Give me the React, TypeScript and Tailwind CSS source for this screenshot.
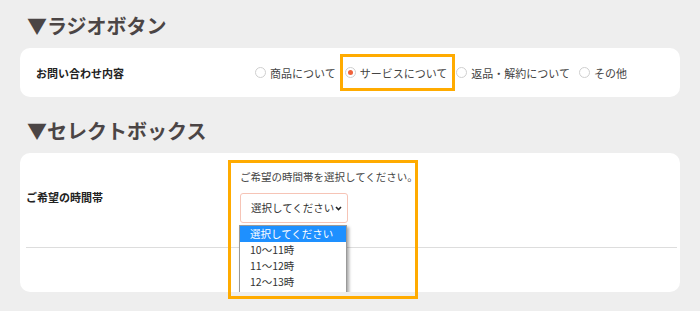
import React from 'react';

const font = "font-['Noto_Sans_CJK_JP','Noto_Sans',sans-serif]";

const options = [
  { label: '商品について', checked: false },
  { label: 'サービスについて', checked: true },
  { label: '返品・解約について', checked: false },
  { label: 'その他', checked: false },
];

const times = ['選択してください', '10〜11時', '11〜12時', '12〜13時'];

const Radio: React.FC<{ label: string; checked: boolean }> = ({ label, checked }) => (
  <label className="flex items-center gap-[4px] mr-[9px]">
    <span className="w-[11px] h-[11px] rounded-full border border-[#cfcfcf] bg-white flex items-center justify-center">
      {checked && <span className="w-[5px] h-[5px] rounded-full bg-[#f0623c]" />}
    </span>
    <span className="text-[11px] leading-[16px] text-[#444] whitespace-nowrap">{label}</span>
  </label>
);

const App: React.FC = () => {
  return (
    <div className={`${font} relative w-[700px] h-[311px] overflow-hidden bg-[#eeeeee] px-[20px] pt-[12px]`}>
      <h2 className="ml-[7px] text-[20px] leading-[28px] font-bold text-[#4b4545]">▼ラジオボタン</h2>

      <div className="mt-[8px] h-[49px] rounded-[10px] bg-white flex items-center">
        <div className="w-[235px] pl-[16px] text-[11px] leading-[16px] font-bold text-[#222]">お問い合わせ内容</div>
        <div className="flex items-center">
          {options.map((o) => (
            <Radio key={o.label} label={o.label} checked={o.checked} />
          ))}
        </div>
      </div>

      <h2 className="mt-[20px] ml-[7px] text-[20px] leading-[28px] font-bold text-[#4b4545]">▼セレクトボックス</h2>

      <div className="relative mt-[8px] h-[139px] rounded-[10px] bg-white overflow-hidden">
        <div className="flex h-[94px]">
          <div className="w-[220px] pl-[6px] pb-[6px] flex items-center text-[11px] leading-[16px] font-bold text-[#222]">
            ご希望の時間帯
          </div>
          <div className="pt-[16px]">
            <p className="text-[10.5px] leading-[16px] text-[#444] whitespace-nowrap">ご希望の時間帯を選択してください。</p>
            <div className="mt-[8px] w-[108px] h-[30px] rounded-[3px] border border-[#f6c4b6] flex items-center justify-between pl-[10px] pr-[5px]">
              <span className="text-[10.5px] leading-[16px] text-[#333] whitespace-nowrap">選択してください</span>
              <svg width="7" height="5" viewBox="0 0 7 5" className="shrink-0">
                <path d="M1 1l2.5 2.5L6 1" fill="none" stroke="#222" strokeWidth="1.6" />
              </svg>
            </div>
          </div>
        </div>
        <div className="ml-[6px] mr-[3px] border-t border-[#dddddd]" />

        <ul className="absolute top-[72px] left-[219px] w-[108px] h-[72px] bg-white border border-[#9a9a9a] shadow-[2px_2px_3px_rgba(0,0,0,0.35)]">
          {times.map((t, i) => (
            <li
              key={t}
              className={`h-[16px] pl-[10px] text-[10.5px] leading-[16px] whitespace-nowrap ${i === 0 ? 'bg-[#1e90ff] text-white' : 'text-[#333]'}`}
            >
              {t}
            </li>
          ))}
        </ul>
      </div>

      <div className="absolute left-[340px] top-[54px] w-[115px] h-[37px] border-[3px] border-[#ffab00]" />
      <div className="absolute left-[228px] top-[160px] w-[190px] h-[139px] border-[3px] border-[#ffab00]" />
    </div>
  );
};

export default App;
